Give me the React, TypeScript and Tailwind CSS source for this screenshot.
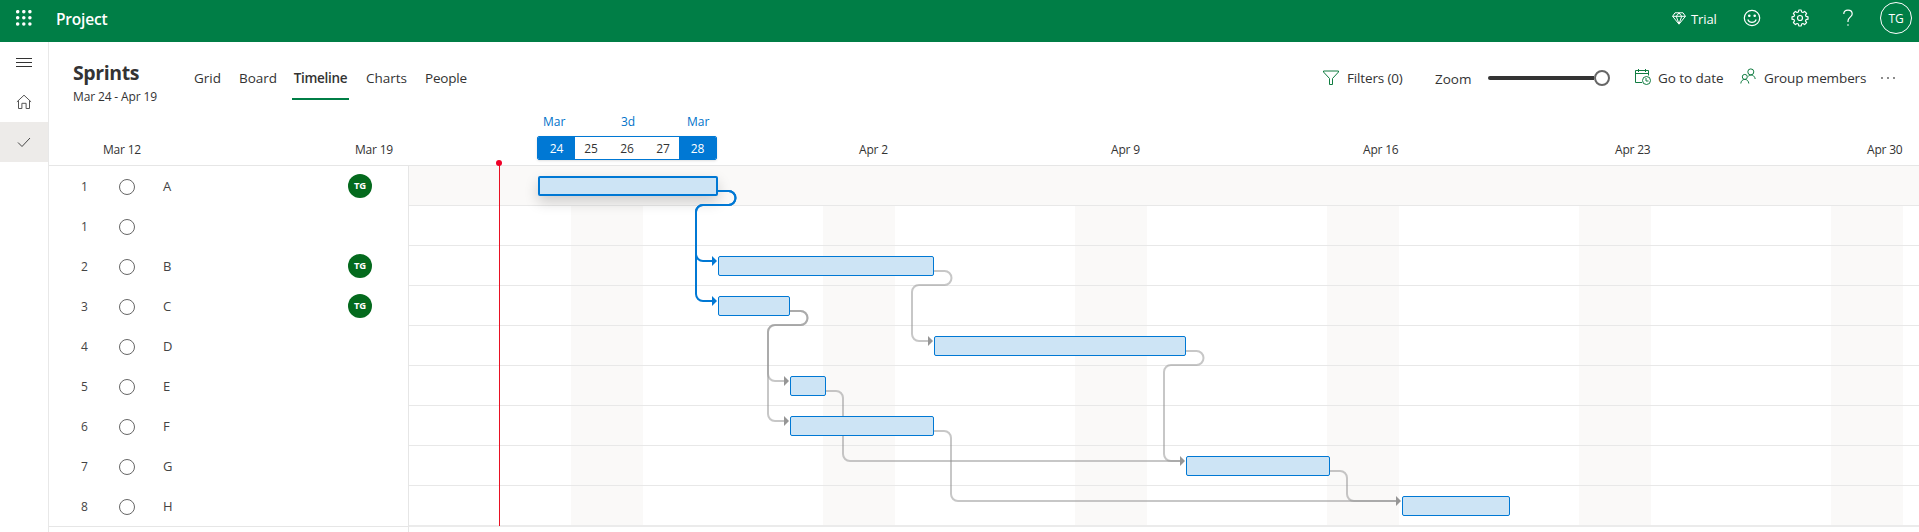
import React from "react";

const DAY = 36;
const ROW = 40;
// chart coordinates: x = 0 at the chart's left edge, y = 0 at its top border
type Bar = { id: string; start: number; days: number; row: number; selected?: boolean };

const BAR_ORIGIN = 129;
const bars: Bar[] = [
  { id: "A", start: 0, days: 5, row: 0, selected: true },
  { id: "B", start: 5, days: 6, row: 2 },
  { id: "C", start: 5, days: 2, row: 3 },
  { id: "D", start: 11, days: 7, row: 4 },
  { id: "E", start: 7, days: 1, row: 5 },
  { id: "F", start: 7, days: 4, row: 6 },
  { id: "G", start: 18, days: 4, row: 7 },
  { id: "H", start: 24, days: 3, row: 8 },
];

const rows = [
  { n: "1", name: "A", who: true },
  { n: "1", name: "", who: false },
  { n: "2", name: "B", who: true },
  { n: "3", name: "C", who: true },
  { n: "4", name: "D", who: false },
  { n: "5", name: "E", who: false },
  { n: "6", name: "F", who: false },
  { n: "7", name: "G", who: false },
  { n: "8", name: "H", who: false },
];

const dates = ["Mar 12", "Mar 19", "", "Apr 2", "Apr 9", "Apr 16", "Apr 23", "Apr 30"];

function back(x: number, y: number, tx: number, ty: number) {
  return `M${x} ${y}h10.5a7 7 0 0 1 0 14H${tx - 15}a7 7 0 0 0 -7 7V${ty - 7}a7 7 0 0 0 7 7H${tx - 5}`;
}
function forward(x: number, y: number, tx: number, ty: number) {
  return `M${x} ${y}h10a7 7 0 0 1 7 7V${ty - 7}a7 7 0 0 0 7 7H${tx - 5}`;
}

const greyLinks = [
  back(525, 105, 525, 175),
  back(381, 145, 381, 215),
  back(381, 145, 381, 255),
  back(777, 185, 777, 295),
  forward(417, 225, 777, 295),
  forward(525, 265, 993, 335),
  forward(921, 305, 993, 335),
];
const greyHeads = [[525, 175], [381, 215], [381, 255], [777, 295], [993, 335]];
const blueHeads = [[309, 95], [309, 135]];
const head = (x: number, y: number) => `M${x - 6} ${y - 5}l5 5l-5 5z`;

function Header() {
  return (
    <header className="flex h-[42px] shrink-0 items-center bg-[#007e46] text-white">
      <svg className="-mt-[7px] ml-4 size-4" viewBox="0 0 16 16" fill="currentColor">
        {[1.7, 7.8, 13.9].map((y) => [1.7, 7.8, 13.9].map((x) => <circle key={`${x}-${y}`} cx={x} cy={y} r="1.75" />))}
      </svg>
      <span className="-mt-[3px] ml-[24px] text-[15.5px] font-semibold tracking-[-0.2px]">Project</span>
      <div className="ml-auto flex h-full items-center">
        <svg className="-mt-[6px] mr-[5px] w-[14px]" viewBox="0 0 14 13" height="13" fill="none" stroke="currentColor" strokeWidth="1" strokeLinejoin="round">
          <path d="M3 .8h8l2.400 3.500L7 12.200.6 4.300zM.6 4.300h12.800M4.300 4.300 7 12l2.700-7.700M4.300 4.300 7 .8l2.700 3.500" />
        </svg>
        <span className="-mt-[3px] w-[25px] text-[13px] tracking-[-0.1px]">Trial</span>
        <svg className="-mt-1.5 ml-[27px] size-[18px]" viewBox="0 0 18 18" fill="none" stroke="currentColor" strokeWidth="1.2">
          <circle cx="9" cy="9" r="7.700" />
          <path d="M4.800 10.500a4.500 4.500 0 0 0 8.400 0" />
          <circle cx="6.300" cy="6.800" r=".7" fill="currentColor" />
          <circle cx="11.700" cy="6.800" r=".7" fill="currentColor" />
        </svg>
        <svg className="-mt-1.5 ml-[30px] size-[18px]" viewBox="0 0 18 18" fill="none" stroke="currentColor" strokeWidth="1.2" strokeLinejoin="round">
          <path d="M7.800 1h2.400l.4 2 1.300.5L13.600 2.400l2 2-1.100 1.700.5 1.300 2 .4v2.400l-2 .4-.5 1.300 1.100 1.700-2 2-1.700-1.100-1.300.5-.4 2H7.800l-.4-2-1.300-.5-1.700 1.100-2-2 1.100-1.700-.5-1.300-2-.4V7.800l2-.4.5-1.300-1.100-1.700 2-2 1.700 1.100 1.300-.5z" />
          <circle cx="9" cy="9" r="2.500" />
        </svg>
        <svg className="-mt-1.5 ml-[34px] h-[18px] w-[10px]" viewBox="0 0 10 18" fill="none" stroke="currentColor" strokeWidth="1.2">
          <path d="M.8 5C.8 2.500 2.600 1.100 5 1.100s4.200 1.400 4.200 3.800c0 3-4.200 3.600-4.200 7v1.200M5 15.200v1.600" />
        </svg>
        <div className="-mt-1.5 mr-[7px] ml-[27px] flex size-8 items-center justify-center rounded-full border border-white pt-[2px] text-[12px] tracking-[-0.2px]">TG</div>
      </div>
    </header>
  );
}

function Rail() {
  return (
    <nav className="flex w-[49px] shrink-0 flex-col border-r border-[#e8e8e8] text-[#333]">
      <div className="flex h-10 items-center justify-center">
        <svg className="size-4" viewBox="0 0 16 16" stroke="currentColor" fill="none"><path d="M0 4.500h16M0 8.500h16M0 12.500h16" /></svg>
      </div>
      <div className="flex h-10 items-center justify-center">
        <svg className="size-4" viewBox="0 0 16 16" stroke="#555" fill="none"><path d="M.9 7.900 8 1.200l7.100 6.700M2.500 6.700v7.800h3.400V9.300h4.200v5.200h3.400V6.700" /></svg>
      </div>
      <div className="flex h-10 items-center justify-center bg-[#edebe9]">
        <svg className="size-4" viewBox="0 0 16 16" stroke="#444" fill="none"><path d="m2 8.500 4 4 8-8.500" /></svg>
      </div>
    </nav>
  );
}

function Toolbar() {
  return (
    <div className="flex h-[66px] shrink-0 text-[13.5px] text-[#333]">
      <div className="w-[145px] pt-[19px] pl-6">
        <h1 className="text-[19.5px] leading-6 font-bold tracking-[-0.4px] whitespace-nowrap">Sprints</h1>
        <p className="text-[12px] leading-6 tracking-[-0.14px] whitespace-nowrap">Mar 24 - Apr 19</p>
      </div>
      <div className="flex pt-[26px] leading-5">
        <span className="w-[45px]">Grid</span>
        <span className="w-[53px]">Board</span>
        <span className="mr-[17px] h-8 w-[57px] border-b-2 border-[#007e46] text-center font-semibold tracking-[-0.3px]">Timeline</span>
        <span className="w-[59px]">Charts</span>
        <span className="tracking-[-0.2px]">People</span>
      </div>
      <div className="ml-auto flex items-start pt-[26px] leading-5 whitespace-nowrap">
        <svg className="mt-[2px] mr-2 size-4" viewBox="0 0 16 16" stroke="#107c41" fill="none"><path d="M.5 1h15v1L9.500 8.500V14.500h-3v-6L.5 2z" /></svg>
        <span className="w-[88px] tracking-[-0.15px]">Filters (0)</span>
        <span className="mt-px w-[53px]">Zoom</span>
        <div className="mr-[25px] flex h-5 w-[122px] items-center">
          <div className="h-1 flex-1 rounded-l-full bg-[#333]" />
          <div className="size-4 rounded-full border-2 border-[#666] bg-white" />
        </div>
        <svg className="mt-px mr-[7px] size-4" viewBox="0 0 16 16" stroke="#107c41" fill="none"><path d="M7 13.500H.5v-12h13v5M.5 4.500h13M3.500 0v3M10.500 0v3" /><circle cx="11.500" cy="11.500" r="4" /><path d="M11 9v3h2.500" /></svg>
        <span className="w-[82px] tracking-[-0.05px]">Go to date</span>
        <svg className="mr-[8px] size-4" viewBox="0 0 16 16" stroke="#107c41" fill="none"><circle cx="10.800" cy="3.900" r="3" /><circle cx="4.800" cy="8.900" r="2.500" /><path d="M.8 15.500c.2-2.500 1.800-4.100 4-4.100s3.800 1.600 4 4.100M8.300 8.200c2.800-2.200 6.400-.9 6.900 2.800" /></svg>
        <span className="w-[116px] tracking-[-0.12px]">Group members</span>
        <svg className="mt-2 mr-[23px] h-1 w-4" viewBox="0 0 16 4" fill="#555"><circle cx="2" cy="2" r=".9" /><circle cx="8" cy="2" r=".9" /><circle cx="14" cy="2" r=".9" /></svg>
      </div>
    </div>
  );
}

function DatePicker() {
  return (
    <div className="absolute top-[5px] left-[488px] w-[180px] bg-white text-[12px]">
      <div className="flex h-[23px] pl-[6px] leading-[18px] text-[#0072c9]">
        <span className="w-[78px]">Mar</span><span className="w-[66px]">3d</span><span>Mar</span>
      </div>
      <div className="flex h-6 items-center overflow-hidden rounded-[2px] border border-[#0078d4] text-center shadow-sm">
        <span className="w-[37px] bg-[#0078d4] pt-[2px] leading-6 text-white">24</span>
        <span className="w-8 pt-[2px]">25</span>
        <span className="w-10 pt-[2px]">26</span>
        <span className="w-8 pt-[2px]">27</span>
        <span className="w-[37px] bg-[#0078d4] pt-[2px] leading-6 text-white">28</span>
      </div>
    </div>
  );
}

function TaskList() {
  return (
    <div className="w-[360px] shrink-0 border-r border-[#e6e6e6] text-[13px] text-[#444]">
      <div className="h-[361px] border-b border-[#e6e6e6]">
        {rows.map((r, i) => (
          <div key={i} className="flex h-10 items-center">
            <span className="w-[70px] pt-[2px] pl-[32px] text-[12px]">{r.n}</span>
            <span className="mt-[2px] size-4 rounded-full border border-[#666]" />
            <span className="ml-7 flex-1 pt-px">{r.name}</span>
            {r.who && <span className="mr-9 flex size-6 items-center justify-center rounded-full bg-[#046a1d] pt-px text-[9.5px] font-bold tracking-[-0.2px] text-white">TG</span>}
          </div>
        ))}
      </div>
    </div>
  );
}

function Chart() {
  return (
    <div className="relative h-[361px] flex-1">
      <div className="absolute inset-0 flex gap-[180px] overflow-hidden pl-[162px]">
        {[0, 1, 2, 3, 4, 5].map((i) => <div key={i} className="w-[72px] shrink-0 bg-[#faf9f8]" />)}
      </div>
      <div className="relative flex h-full flex-col">
        {rows.map((_, i) => (
          <div key={i} className={i === 0 ? "h-10 border-b border-[#e8e8e8] bg-[#faf9f8]" : i === 8 ? "h-[41px] border-b-2 border-[#ebebeb]" : "h-10 border-b border-[#e8e8e8]"} />
        ))}
      </div>
      <svg className="absolute top-0 left-0" width="1510" height="361" fill="none">
        <g stroke="#909090" strokeOpacity=".5" strokeWidth="2">{greyLinks.map((d) => <path key={d} d={d} />)}</g>
        {greyHeads.map(([x, y]) => <path key={`${x}-${y}`} d={head(x, y)} fill="#969696" />)}
      </svg>
      {bars.map((b) => (
        <div
          key={b.id}
          className={b.selected ? "absolute h-5 rounded-[2px] border-2 border-[#0078d4] bg-[#cde4f5] shadow-[0_6px_14px_rgba(0,0,0,0.18)]" : "absolute h-5 rounded-[2px] border border-[#0078d4] bg-[#cde4f5]"}
          style={{ left: BAR_ORIGIN + b.start * DAY, top: b.row * ROW + 10, width: b.days * DAY }}
        />
      ))}
      <svg className="absolute top-0 left-0" width="1510" height="361" fill="none">
        <g stroke="#0078d4" strokeWidth="2"><path d={back(309, 25, 309, 95)} /><path d={back(309, 25, 309, 135)} /></g>
        {blueHeads.map(([x, y]) => <path key={`${x}-${y}`} d={head(x, y)} fill="#0078d4" />)}
      </svg>
      <div className="absolute -top-1 left-[90px] h-[364px] w-px bg-[#e81123]" />
      <div className="absolute -top-[6px] left-[87px] size-[6px] rounded-full bg-[#f00028]" />
    </div>
  );
}

export default function App() {
  return (
    <div className="flex h-[532px] w-[1919px] flex-col overflow-hidden bg-white font-['Open_Sans','Noto_Sans',sans-serif] text-[#333]">
      <Header />
      <div className="flex min-h-0 flex-1">
        <Rail />
        <main className="flex min-w-0 flex-1 flex-col">
          <Toolbar />
          <div className="relative flex h-[58px] shrink-0 items-end border-b border-[#e6e6e6] pl-[54px]">
            {dates.map((d, i) => <span key={i} className={i === 7 ? "pb-[5px] text-[12px] leading-5 tracking-[-0.2px]" : "w-[252px] shrink-0 pb-[5px] text-[12px] leading-5 tracking-[-0.2px]"}>{d}</span>)}
            <DatePicker />
          </div>
          <div className="flex flex-1">
            <TaskList />
            <Chart />
          </div>
        </main>
      </div>
    </div>
  );
}
